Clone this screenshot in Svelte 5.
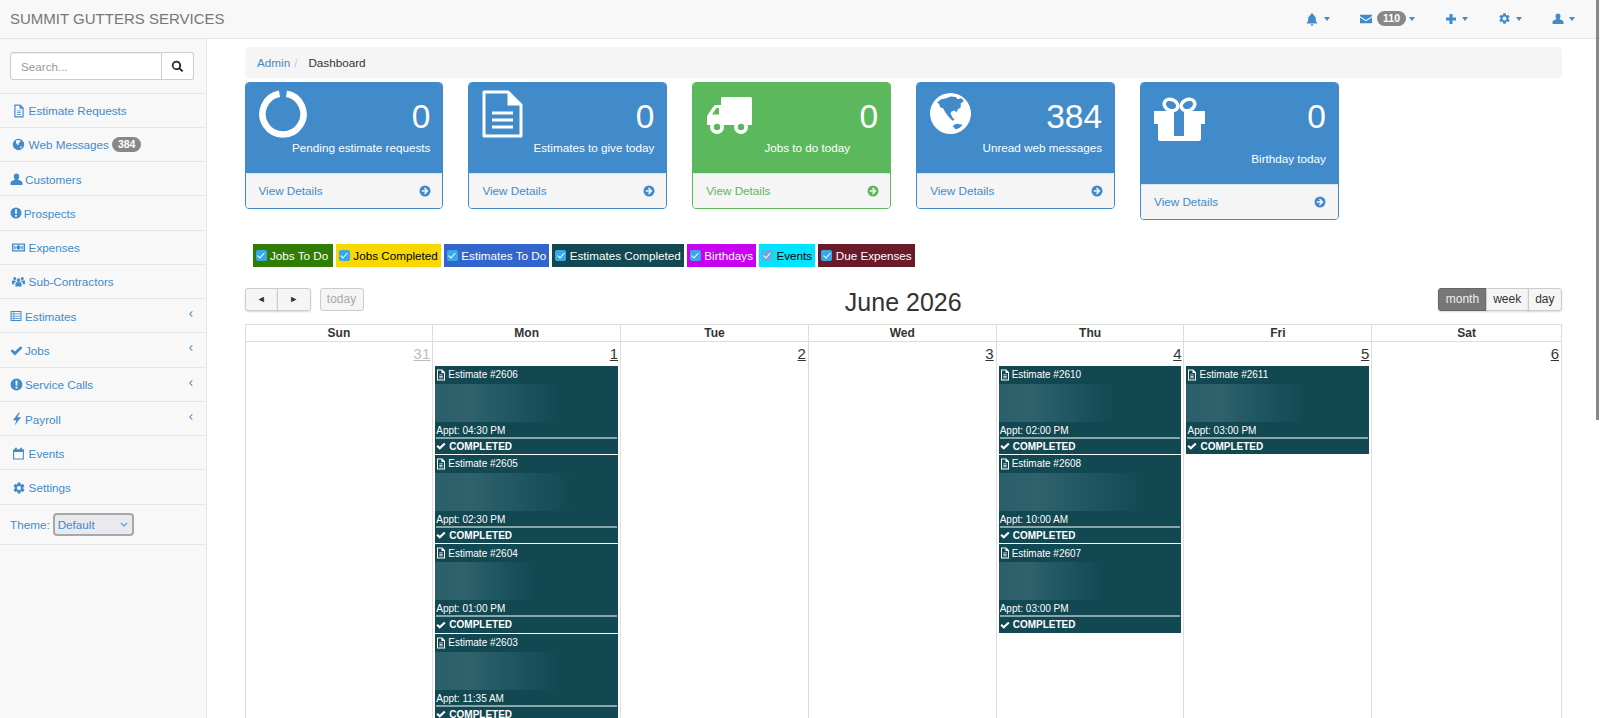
<script>
  const ic = {
    file: 'M4 1h10.5L20 6.5V23H4zM6 3v18h12V8h-5V3zM8.5 11h7v1.6h-7zM8.5 14h7v1.6h-7zM8.5 17h7v1.6h-7z',
    globe: 'M12 1.5a10.5 10.5 0 1 0 0 21 10.5 10.5 0 0 0 0-21zM7 5l4-1.5 5 1-1 3-3 1.5 1 3-2 1-3-3zM15 16l4-1-3 5z',
    user: 'M12 1c3 0 5 2.4 5 5.6 0 2.4-1 4.4-2.4 5.4 3 1 7.4 3 8.4 5.5V22H1v-4.500c1-2.500 5.400-4.500 8.400-5.500C8 11 7 9 7 6.600 7 3.400 9 1 12 1z',
    alert: 'M12 1a11 11 0 1 0 0 22 11 11 0 0 0 0-22zM10 5h4l-.5 9h-3zM10.200 16h3.600v3.400h-3.600z',
    money: 'M0 4.500h24v15H0zM2.500 7v10h19V7zM12 8a4 4 0 1 1 0 8 4 4 0 0 1 0-8zM4 9h2.500v6H4zM17.500 9H20v6h-2.500z',
    group: 'M12 6a3.400 3.400 0 1 1 0 6.800A3.400 3.400 0 0 1 12 6zM5 3.500A2.800 2.800 0 1 1 5 9.100a2.800 2.800 0 0 1 0-5.600zM19 3.500a2.800 2.800 0 1 1 0 5.600 2.800 2.800 0 0 1 0-5.600zM7 13.500h10l1 7.500H6zM0 10h6.500l.5 2.500-2.500 1L4 17H0zM17.500 10H24v7h-4l-.5-3.500-2.500-1z',
    table: 'M1 2h22v20H1zM3 4v3h4V4zM8.500 4v3H21V4zM3 8.500v3h4v-3zM8.500 8.500v3H21v-3zM3 13v3h4v-3zM8.500 13v3H21v-3zM3 17.500V20h4v-2.500zM8.500 17.500V20H21v-2.500z',
    check: 'M1 13l3.500-3.500 4.500 4.500L19.500 4 23 7.500 9 21z',
    bolt: 'M15 1L5 14h6l-3 9 11-14h-6.500L17 1z',
    cal: 'M2 4h20v19H2zM4 9v12h16V9zM5.500 1.500H9V4H5.500zM15 1.500h3.500V4H15z',
    gear: 'M19.140 12.940c.04-.3.06-.61.06-.94 0-.32-.02-.64-.07-.94l2.030-1.580c.18-.14.23-.41.12-.61l-1.920-3.320c-.12-.22-.37-.29-.59-.22l-2.390.96c-.5-.38-1.030-.7-1.620-.94l-.36-2.540c-.04-.24-.24-.41-.48-.41h-3.840c-.24 0-.43.17-.47.41l-.36 2.540c-.59.24-1.130.57-1.620.94l-2.390-.96c-.22-.08-.47 0-.59.22L2.740 8.870c-.12.21-.08.47.12.61l2.030 1.580c-.05.3-.09.63-.09.94s.02.64.07.94l-2.030 1.580c-.18.14-.23.41-.12.61l1.920 3.320c.12.22.37.29.59.22l2.390-.96c.5.38 1.030.7 1.620.94l.36 2.540c.05.24.24.41.48.41h3.840c.24 0 .44-.17.47-.41l.36-2.540c.59-.24 1.130-.56 1.620-.94l2.390.96c.22.08.47 0 .59-.22l1.920-3.320c.12-.22.07-.47-.12-.61l-2.010-1.580zM12 15.600c-1.980 0-3.600-1.620-3.600-3.600s1.620-3.600 3.600-3.600 3.600 1.620 3.600 3.600-1.620 3.600-3.600 3.600z',
    bell: 'M12 23.500c1.300 0 2.400-1 2.400-2.300H9.600c0 1.300 1.100 2.300 2.400 2.300zM21.500 19.500H2.500c2-2 3-4 3-8 0-3.500 2.300-6.300 5-7V3.200a1.500 1.500 0 0 1 3 0v1.300c2.700.7 5 3.500 5 7 0 4 1 6 3 8z',
    mail: 'M0 3.500h24v3L12 14 0 6.500zM0 9l12 7.500L24 9v11.500H0z',
    plus: 'M9 2h6v7h7v6h-7v7H9v-7H2V9h7z',
    search: 'M10 1.500a8.500 8.500 0 1 0 5 15.400l5.400 5.400 2.300-2.300-5.400-5.400A8.500 8.500 0 0 0 10 1.500zM10 4.700a5.300 5.300 0 1 1 0 10.600 5.300 5.300 0 0 1 0-10.600z',
    left: 'M15 3l2 2-7 7 7 7-2 2-9-9z',
    go: 'M12 1a11 11 0 1 0 0 22 11 11 0 0 0 0-22zM12 5l7 7-7 7-2.200-2.200 3.200-3.200H5.500v-3.200H13L9.800 7.200z'
  }

  const menu = [
    { icon: 'file', sz: 'i14', label: 'Estimate Requests', pad: 'wide' },
    { icon: 'globe', sz: 'i13', label: 'Web Messages', pad: 'wide', badge: 384 },
    { icon: 'user', sz: 'i13', label: 'Customers', pad: 'mid' },
    { icon: 'alert', sz: 'i12', label: 'Prospects', pad: 'thin' },
    { icon: 'money', sz: 'i13', label: 'Expenses', pad: 'wide' },
    { icon: 'group', sz: 'i13', label: 'Sub-Contractors', pad: 'wide' },
    { icon: 'table', sz: 'i12', label: 'Estimates', pad: 'mid', more: true },
    { icon: 'check', sz: 'i13', label: 'Jobs', pad: 'mid', more: true },
    { icon: 'alert', sz: 'i13', label: 'Service Calls', pad: 'mid', more: true },
    { icon: 'bolt', sz: 'i14', label: 'Payroll', pad: 'mid', more: true },
    { icon: 'cal', sz: 'i13', label: 'Events', pad: 'wide' },
    { icon: 'gear', sz: 'i14', label: 'Settings', pad: 'wide' }
  ]

  const cards = [
    { kind: 'ring', value: '0', label: 'Pending estimate requests' },
    { kind: 'doc', value: '0', label: 'Estimates to give today' },
    { kind: 'truck', value: '0', label: 'Jobs to do today', color: 'green' },
    { kind: 'earth', value: '384', label: 'Unread web messages' },
    { kind: 'gift', value: '0', label: 'Birthday today', color: 'tall' }
  ]

  const filters = [
    { label: 'Jobs To Do', cls: 'f-green' },
    { label: 'Jobs Completed', cls: 'f-yellow' },
    { label: 'Estimates To Do', cls: 'f-blue' },
    { label: 'Estimates Completed', cls: 'f-teal' },
    { label: 'Birthdays', cls: 'f-purple' },
    { label: 'Events', cls: 'f-cyan' },
    { label: 'Due Expenses', cls: 'f-maroon' }
  ]

  const days = [
    { d: 31, off: true, ev: [] },
    { d: 1, ev: [
      { n: 2606, t: '04:30 PM', w: 62 },
      { n: 2605, t: '02:30 PM', w: 68 },
      { n: 2604, t: '01:00 PM', w: 50 },
      { n: 2603, t: '11:35 AM', w: 62 }
    ] },
    { d: 2, ev: [] },
    { d: 3, ev: [] },
    { d: 4, ev: [
      { n: 2610, t: '02:00 PM', w: 58 },
      { n: 2608, t: '10:00 AM', w: 74 },
      { n: 2607, t: '03:00 PM', w: 52 }
    ] },
    { d: 5, ev: [{ n: 2611, t: '03:00 PM', w: 60 }] },
    { d: 6, ev: [] }
  ]
</script>

{#snippet icon(name, cls = '')}
  <svg class="ic {cls}" viewBox="0 0 24 24" aria-hidden="true"><path d={ic[name]} fill-rule="evenodd" /></svg>
{/snippet}

<div class="page">
  <header class="nav">
    <span class="brand">SUMMIT GUTTERS SERVICES</span>
    <div class="tools">
      <span class="tool">{@render icon('bell', 'i14')}<i class="caret"></i></span>
      <span class="tool">{@render icon('mail', 'i12')}<b class="badge">110</b><i class="caret"></i></span>
      <span class="tool">{@render icon('plus', 'i12')}<i class="caret"></i></span>
      <span class="tool">{@render icon('gear', 'i13')}<i class="caret"></i></span>
      <span class="tool">{@render icon('user', 'i12')}<i class="caret"></i></span>
    </div>
  </header>

  <div class="body">
    <aside class="side">
      <div class="search-row">
        <div class="search">
          <input type="text" placeholder="Search..." />
          <button aria-label="Search">{@render icon('search', 'i13 dark')}</button>
        </div>
      </div>
      {#each menu as m}
        <a class="item" href="#top">
          <span class="slot {m.pad}">{@render icon(m.icon, m.sz)}</span>
          {m.label}
          {#if m.badge}<b class="badge side-badge">{m.badge}</b>{/if}
          {#if m.more}<span class="more">{@render icon('left', 'i8')}</span>{/if}
        </a>
      {/each}
      <div class="theme">
        <label for="theme">Theme:</label>
        <span class="sel">
          <select id="theme"><option>Default</option></select>
          <svg class="chev" width="8" height="5" viewBox="0 0 8 5"><path d="M.8.8L4 4 7.200.8" fill="none" stroke="#5a96cf" stroke-width="1.200" /></svg>
        </span>
      </div>
    </aside>

    <main class="main">
      <nav class="crumbs"><a href="#top">Admin</a><span class="sep">/</span><span>Dashboard</span></nav>

      <div class="cards">
        {#each cards as c}
          <div class="card {c.color ?? ''}">
            <div class="head">
              <div class="glyph g-{c.kind}">
                {#if c.kind === 'ring'}
                  <svg width="48" height="48" viewBox="0 0 48 48"><path d="M20.500 3.800A20.500 20.500 0 1 0 27.500 3.800" fill="none" stroke="#fff" stroke-width="6.500" /></svg>
                {:else if c.kind === 'doc'}
                  <svg width="41" height="48" viewBox="0 0 41 48" fill="none" stroke="#fff" stroke-width="3"><path d="M2 2H26L39 15V46H2Z" stroke-linejoin="round" /><path d="M27 2V14H39" fill="#fff" /><path d="M10 23H31M10 30H31M10 37H31" /></svg>
                {:else if c.kind === 'truck'}
                  <svg width="46" height="37" viewBox="0 0 46 37"><path d="M15 1.500Q15 0 16.500 0H44.500Q46 0 46 1.500V28H1V20.500Q1 19 2 17.500L7 10Q8 8 10 8H15ZM6 17.500H13V11H10.500Z" fill="#fff" fill-rule="evenodd" /><circle cx="11" cy="30" r="7" fill="#fff" /><circle cx="11" cy="30" r="3.200" fill="#5cb85c" /><circle cx="35" cy="30" r="7" fill="#fff" /><circle cx="35" cy="30" r="3.200" fill="#5cb85c" /></svg>
                {:else if c.kind === 'earth'}
                  <svg width="41" height="41" viewBox="0 0 40 40"><circle cx="20" cy="20" r="20" fill="#fff" /><path d="M7 9L11 6L16 5L20 3.500L25 4L27 6L31 5L33 8L30 10L30 14L27 16L26 19L24 17L21 18L20 20L22 24L24 26L22 27L18 23L15 19L13 15L10 14L9 11ZM22 32L26 30L32 31L29 34L25 35.500Z" fill="#428bca" /></svg>
                {:else}
                  <svg width="51" height="44" viewBox="0 0 51 44"><ellipse cx="17" cy="8" rx="7" ry="5.500" fill="none" stroke="#fff" stroke-width="3.500" transform="rotate(25 17 8)" /><ellipse cx="34" cy="8" rx="7" ry="5.500" fill="none" stroke="#fff" stroke-width="3.500" transform="rotate(-25 34 8)" /><path d="M0 14H20V39H30V14H51V27H47V42Q47 44 45 44H6Q4 44 4 42V27H0Z" fill="#fff" /></svg>
                {/if}
              </div>
              <div class="nums">
                <div class="value">{c.value}</div>
                <div class="label">{c.label}</div>
              </div>
            </div>
            <div class="foot"><span>View Details</span>{@render icon('go', 'i12')}</div>
          </div>
        {/each}
      </div>

      <div class="filters">
        {#each filters as f}
          <label class="chip {f.cls}"><input type="checkbox" checked />{f.label}</label>
        {/each}
      </div>

      <div class="toolbar">
        <div class="left">
          <div class="btns">
            <button class="fc" aria-label="prev">◄</button><button class="fc" aria-label="next">►</button>
          </div>
          <button class="fc off">today</button>
        </div>
        <h2>June 2026</h2>
        <div class="btns right">
          <button class="fc on">month</button><button class="fc">week</button><button class="fc">day</button>
        </div>
      </div>

      <div class="cal">
        {#each ['Sun', 'Mon', 'Tue', 'Wed', 'Thu', 'Fri', 'Sat'] as h}
          <div class="dow">{h}</div>
        {/each}
        {#each days as day}
          <div class="cell">
            <div class="num" class:off={day.off}>{day.d}</div>
            {#each day.ev as e}
              <div class="event">
                <div class="e-title">{@render icon('file', 'i12')}Estimate #{e.n}</div>
                <div class="e-blur" style="--w: {e.w}%"></div>
                <div class="e-appt">Appt: {e.t}</div>
                <div class="e-done">{@render icon('check', 'i10')}COMPLETED</div>
              </div>
            {/each}
          </div>
        {/each}
      </div>
    </main>
  </div>
  <div class="thumb"></div>
</div>

<style>
  :global(body) {
    margin: 0;
    overflow: hidden;
    background: #fff;
  }

  .page {
    color: #333;
    display: flex;
    flex-direction: column;
    font-family: "Liberation Sans", Arial, sans-serif;
    font-size: 11.7px;
    height: 718px;
    overflow: hidden;
    position: relative;
  }

  .ic {
    display: block;
    fill: #428bca;
    flex: none;
  }
  .i8 { height: 8px; width: 8px; }
  .i10 { height: 10px; width: 10px; }
  .i12 { height: 12px; width: 12px; }
  .i13 { height: 13px; width: 13px; }
  .i14 { height: 14px; width: 14px; }
  .dark { fill: #222; }

  .nav {
    align-items: center;
    background: #f8f8f8;
    border-bottom: 1px solid #e7e7e7;
    box-sizing: border-box;
    display: flex;
    flex: none;
    height: 39px;
    justify-content: space-between;
    padding: 0 25px 1px 10px;
  }

  .brand {
    color: #777;
    font-size: 15px;
  }

  .tools {
    align-items: center;
    display: flex;
    gap: 30px;
  }

  .tool {
    align-items: center;
    display: flex;
    gap: 5px;
  }

  .caret {
    border-left: 3.5px solid transparent;
    border-right: 3.5px solid transparent;
    border-top: 4px solid #428bca;
    height: 0;
    width: 0;
  }

  .badge {
    background: #888;
    border-radius: 8px;
    color: #fff;
    font-size: 10.5px;
    line-height: 15px;
    padding: 0 6px;
  }

  .tool .badge {
    margin-right: -2px;
  }

  .body {
    display: flex;
    flex: 1;
    min-height: 0;
  }

  .side {
    background: #f8f8f8;
    border-right: 1px solid #e7e7e7;
    flex: none;
    width: 206px;
  }

  .search-row {
    border-bottom: 1px solid #e7e7e7;
    box-sizing: border-box;
    height: 54.5px;
    padding: 13px 12.5px 0 10px;
  }

  .search {
    display: flex;
    height: 28px;
  }

  .search input {
    border: 1px solid #ccc;
    border-radius: 3px 0 0 3px;
    box-shadow: inset 0 1px 1px rgba(0, 0, 0, 0.075);
    box-sizing: border-box;
    color: #555;
    flex: 1;
    font: inherit;
    min-width: 0;
    padding: 0 10px;
  }

  .search input::placeholder {
    color: #999;
  }

  .search button {
    align-items: center;
    background: #fff;
    border: 1px solid #ccc;
    border-left: 0;
    border-radius: 0 3px 3px 0;
    display: flex;
    justify-content: center;
    padding: 0;
    width: 32px;
  }

  .item {
    align-items: center;
    border-bottom: 1px solid #e7e7e7;
    box-sizing: border-box;
    color: #428bca;
    display: flex;
    height: 34.28px;
    padding: 1px 0 0 10px;
    text-decoration: none;
  }

  .slot {
    display: flex;
    flex: none;
  }
  .slot.wide { padding-left: 2px; width: 16.6px; }
  .slot.mid { width: 15px; }
  .slot.thin { width: 13.7px; }

  .side-badge {
    margin-left: 3px;
  }

  .more {
    margin-left: auto;
    margin-right: 11px;
    margin-top: -4px;
  }

  .theme {
    align-items: center;
    border-bottom: 1px solid #e7e7e7;
    box-sizing: border-box;
    color: #428bca;
    display: flex;
    gap: 3px;
    height: 40px;
    padding: 0 0 0 10px;
  }

  .sel {
    display: block;
    height: 23px;
    position: relative;
    width: 81px;
  }

  .sel select {
    appearance: none;
    background: #e9e9f0;
    border: 2px solid #a8a8a8;
    border-radius: 4px;
    box-sizing: border-box;
    color: #428bca;
    font: inherit;
    height: 100%;
    padding: 0 0 0 3px;
    width: 100%;
  }

  .chev {
    position: absolute;
    right: 6px;
    top: 9px;
  }

  .main {
    flex: 1;
    min-width: 0;
    padding: 8px 38px 0 37.5px;
  }

  .crumbs {
    align-items: center;
    background: #f5f5f5;
    border-radius: 4px;
    box-sizing: border-box;
    display: flex;
    height: 31px;
    padding-left: 12.5px;
  }

  .crumbs a {
    color: #428bca;
    text-decoration: none;
  }

  .sep {
    color: #ccc;
    margin: 0 11px 0 4px;
  }

  .cards {
    align-items: flex-start;
    display: flex;
    gap: 25px;
    margin-top: 4px;
  }

  .card {
    border: 1px solid #428bca;
    border-radius: 4px;
    box-sizing: border-box;
    flex: none;
    overflow: hidden;
    width: 198.9px;
  }

  .head {
    background: #428bca;
    box-sizing: border-box;
    color: #fff;
    display: flex;
    height: 90px;
    justify-content: space-between;
    padding: 0 12px 0 13px;
  }

  .glyph {
    width: 0;
  }

  .g-ring, .g-doc { padding-top: 7px; }
  .g-earth { padding-top: 10px; }
  .g-truck, .g-gift { padding-top: 14px; }

  .nums {
    text-align: right;
    white-space: nowrap;
  }

  .value {
    font-size: 33.5px;
    line-height: 39px;
    margin-top: 14px;
  }

  .label {
    line-height: 17px;
    margin-top: 3px;
  }

  .foot {
    align-items: center;
    background: #f5f5f5;
    border-top: 1px solid #d8e4ef;
    color: #428bca;
    display: flex;
    height: 33.5px;
    justify-content: space-between;
    padding: 0 11.5px 0 13px;
  }

  .green { border-color: #5cb85c; }
  .green .head { background: #5cb85c; }
  .green .foot { color: #5cb85c; }
  .green .foot .ic { fill: #5cb85c; }
  .green .label { margin-right: 28px; }

  .tall .head { height: 101px; }
  .tall .label { margin-top: 14px; }

  .filters {
    display: flex;
    gap: 3.1px;
    margin: 24px 0 0 8px;
  }

  .chip {
    align-items: center;
    display: flex;
    height: 23px;
    padding: 0 2.9px 0 3px;
  }

  .chip.f-green {
    padding-right: 4.5px;
  }

  .chip input {
    appearance: none;
    background: #3aa8e8;
    border-radius: 2px;
    height: 11px;
    margin: 0 3.5px 0 0;
    position: relative;
    width: 11px;
  }

  .chip input::after {
    border-bottom: 1.6px solid #fff;
    border-right: 1.6px solid #fff;
    content: "";
    height: 6px;
    left: 3.4px;
    position: absolute;
    top: 1px;
    transform: rotate(42deg);
    width: 2.6px;
  }

  .f-green { background: #2f7d04; color: #fff; }
  .f-yellow { background: #f7d900; color: #000; }
  .f-blue { background: #3366cc; color: #fff; }
  .f-teal { background: #124852; color: #fff; }
  .f-purple { background: #c800f0; color: #fff; }
  .f-cyan { background: #00e5ff; color: #000; }
  .f-cyan input { background: #5fb0e0; }
  .f-maroon { background: #6b1a2a; color: #fff; }

  .toolbar {
    align-items: flex-start;
    display: flex;
    justify-content: space-between;
    margin-top: 21px;
    position: relative;
  }

  .left {
    display: flex;
    gap: 9px;
  }

  .btns {
    display: flex;
  }

  .fc {
    background: #f5f5f5;
    border: 1px solid #ccc;
    box-shadow: 0 1px 2px rgba(0, 0, 0, 0.15);
    box-sizing: border-box;
    color: #333;
    font: inherit;
    font-size: 12px;
    height: 23px;
    margin-left: -1px;
    padding: 0 6.5px;
  }

  .btns .fc:first-child { border-radius: 3px 0 0 3px; margin-left: 0; }
  .btns .fc:last-child { border-radius: 0 3px 3px 0; }
  .left .btns .fc { font-size: 9px; width: 33.5px; }

  .fc.off {
    border-radius: 3px;
    box-shadow: none;
    color: #aaa;
    margin-left: 0;
    padding: 0;
    width: 44px;
  }

  .fc.on {
    background: #777;
    border-color: #666;
    color: #eee;
  }

  h2 {
    font-size: 25px;
    font-weight: 400;
    left: 0;
    line-height: 28px;
    margin: 0;
    position: absolute;
    right: 0;
    text-align: center;
  }

  .cal {
    border-left: 1px solid #ddd;
    display: grid;
    grid-template-columns: repeat(6, 187.8px) minmax(0, 1fr);
    margin-top: 13px;
  }

  .dow {
    border-bottom: 1px solid #ddd;
    border-right: 1px solid #ddd;
    border-top: 1px solid #ddd;
    font-size: 12px;
    font-weight: 700;
    line-height: 16px;
    text-align: center;
  }

  .cell {
    border-right: 1px solid #ddd;
    height: 400px;
  }

  .num {
    font-size: 15px;
    line-height: 17px;
    padding: 3px 2px 4px 0;
    text-align: right;
    text-decoration: underline;
  }

  .num.off {
    color: #bbb;
  }

  .event {
    background: #124852;
    color: #fff;
    font-size: 10px;
    height: 88.4px;
    margin: 0 2px 1px;
  }

  .event .ic {
    fill: #fff;
  }

  .e-title {
    align-items: center;
    display: flex;
    gap: 1px;
    height: 18px;
  }

  .e-blur {
    background: linear-gradient(90deg, #2a5f6b, #2f626c calc(var(--w) * 0.3), #1d5560 calc(var(--w) * 0.7), #124852 calc(var(--w) * 1.1));
    height: 38px;
  }

  .e-appt {
    border-bottom: 2px solid #8aa5aa;
    height: 15px;
    line-height: 18px;
    margin: 0 1px;
  }

  .e-done {
    align-items: center;
    display: flex;
    font-weight: 700;
    gap: 3px;
    height: 15px;
    padding-left: 1px;
  }

  .thumb {
    background: #888;
    height: 420px;
    position: absolute;
    right: 1px;
    top: 0;
    width: 3px;
  }
</style>
